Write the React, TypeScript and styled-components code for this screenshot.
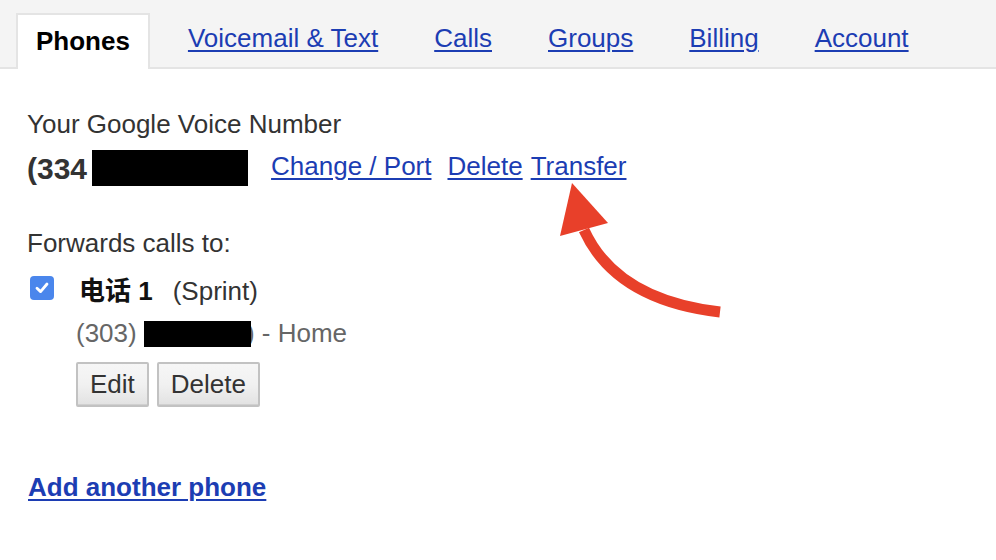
import React from "react";
import styled, { createGlobalStyle } from "styled-components";

const Global = createGlobalStyle`
  html, body { margin: 0; padding: 0; background: #fff; }
  body {
    font-family: "Liberation Sans", Arial, "Noto Sans CJK SC", sans-serif;
    font-size: 26px;
    color: #333;
  }
`;

const Page = styled.div`
  position: relative;
  width: 996px;
  height: 560px;
  overflow: hidden;
`;

const TabBar = styled.nav`
  display: flex;
  align-items: flex-start;
  box-sizing: border-box;
  height: 69px;
  padding-left: 16px;
  background: #f4f4f4;
  border-bottom: 2px solid #e4e4e4;
`;

const ActiveTab = styled.div`
  box-sizing: border-box;
  margin-top: 13px;
  height: 56px;
  padding: 14px 18px 0 18px;
  background: #fff;
  border: 2px solid #e4e4e4;
  border-bottom: none;
  font-weight: bold;
  color: #000;
  line-height: 25px;
`;

const TabLink = styled.a<{ $first?: boolean }>`
  margin-top: 26px;
  margin-left: ${(p) => (p.$first ? "38px" : "56px")};
  line-height: 25px;
  color: #1c3db3;
  text-decoration: underline;
  text-underline-offset: 3px;
  cursor: pointer;
`;

const Content = styled.main`
  padding-left: 27px;
`;

const Label = styled.div<{ $top: number }>`
  margin-top: ${(p) => p.$top}px;
  line-height: 25px;
  color: #333;
`;

const NumberRow = styled.div`
  display: flex;
  align-items: center;
  height: 36px;
  margin-top: 13px;
  line-height: 25px;
  white-space: nowrap;
`;

const BigNumber = styled.span`
  font-size: 30px;
  font-weight: bold;
  color: #333;
`;

const Redact = styled.span<{ $w: number; $h: number; $left?: number; $right?: number }>`
  position: relative;
  z-index: 1;
  display: inline-block;
  width: ${(p) => p.$w}px;
  height: ${(p) => p.$h}px;
  margin-left: ${(p) => p.$left ?? 0}px;
  margin-right: ${(p) => p.$right ?? 0}px;
  background: #000;
  vertical-align: -5px;
`;

const ActionLink = styled.a<{ $gap: number }>`
  margin-left: ${(p) => p.$gap}px;
  margin-bottom: 4px;
  color: #1c3db3;
  text-decoration: underline;
  text-underline-offset: 3px;
  cursor: pointer;
`;

const PhoneRow = styled.div`
  display: flex;
  align-items: flex-start;
  margin-top: 23px;
  line-height: 25px;
`;

const Check = styled.span`
  display: inline-flex;
  align-items: center;
  justify-content: center;
  box-sizing: border-box;
  width: 24px;
  height: 24px;
  margin-top: -3px;
  margin-left: 3px;
  border-radius: 4px;
  background: #4a86ec;
`;

const PhoneName = styled.span`
  margin-left: 25px;
  font-weight: bold;
  color: #111;
`;

const Carrier = styled.span`
  margin-left: 20px;
  color: #333;
`;

const Details = styled.div`
  margin-top: 17px;
  padding-left: 49px;
  line-height: 25px;
  color: #666;
  white-space: nowrap;
`;

const ButtonRow = styled.div`
  display: flex;
  gap: 8px;
  margin-top: 15px;
  padding-left: 49px;
`;

const Button = styled.button`
  box-sizing: border-box;
  height: 45px;
  padding: 0 12px;
  font-family: inherit;
  font-size: 26px;
  color: #333;
  background: linear-gradient(#f6f6f6, #f1f1f1 50%, #e2e2e2);
  border: 2px solid #c2c2c2;
  border-radius: 2px;
  box-shadow: inset 0 -1px 0 #d0d0d0;
`;

const AddLink = styled.a`
  display: inline-block;
  margin-top: 68px;
  margin-left: 1px;
  line-height: 25px;
  font-weight: bold;
  color: #1c3db3;
  text-decoration: underline;
  text-underline-offset: 3px;
  cursor: pointer;
`;

const Arrow = styled.svg`
  position: absolute;
  left: 0;
  top: 0;
  pointer-events: none;
`;

export default function App() {
  return (
    <Page>
      <Global />
      <TabBar>
        <ActiveTab>Phones</ActiveTab>
        <TabLink $first>Voicemail &amp; Text</TabLink>
        <TabLink>Calls</TabLink>
        <TabLink>Groups</TabLink>
        <TabLink>Billing</TabLink>
        <TabLink>Account</TabLink>
      </TabBar>
      <Content>
        <Label $top={43}>Your Google Voice Number</Label>
        <NumberRow>
          <BigNumber>(334</BigNumber>
          <Redact $w={156} $h={36} $left={5} />
          <ActionLink $gap={23}>Change / Port</ActionLink>
          <ActionLink $gap={16}>Delete</ActionLink>
          <ActionLink $gap={8}>Transfer</ActionLink>
        </NumberRow>
        <Label $top={45}>Forwards calls to:</Label>
        <PhoneRow>
          <Check>
            <svg width="16" height="16" viewBox="0 0 16 16">
              <path d="M3 8.3 L6.6 11.6 L13 4" fill="none" stroke="#fff" strokeWidth="2.8" strokeLinecap="round" strokeLinejoin="round" />
            </svg>
          </Check>
          <PhoneName>电话 1</PhoneName>
          <Carrier>(Sprint)</Carrier>
        </PhoneRow>
        <Details>
          (303) <Redact $w={107} $h={26} $right={-5} />) - Home
        </Details>
        <ButtonRow>
          <Button>Edit</Button>
          <Button>Delete</Button>
        </ButtonRow>
        <AddLink>Add another phone</AddLink>
      </Content>
      <Arrow width="996" height="560" viewBox="0 0 996 560">
        <path d="M584 230 Q616 300 720 312" fill="none" stroke="#e8402a" strokeWidth="11" />
        <polygon points="572,183 560,236 608,223" fill="#e8402a" />
      </Arrow>
    </Page>
  );
}
